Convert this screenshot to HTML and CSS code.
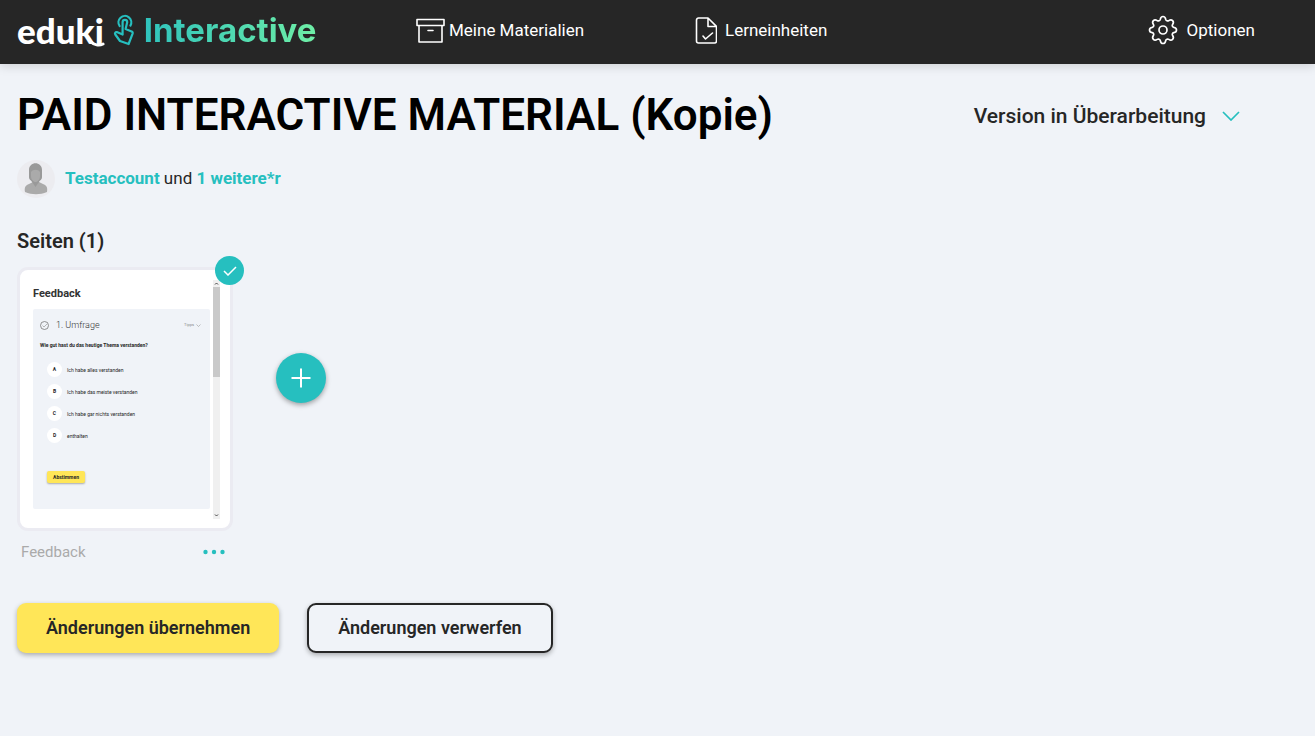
FILE: index.html
```html
<!DOCTYPE html>
<html lang="de">
<head>
    <meta charset="UTF-8">
    <meta name="viewport" content="width=device-width, initial-scale=1.0">
    <title>eduki Interactive</title>
    <link rel="stylesheet" href="styles.css">
</head>
<body>
    <header class="topbar">
        <a href="#" class="brand">
            <span class="brand-name">eduki
                <svg class="brand-swoosh" width="16" height="7" viewBox="0 0 16 7" fill="none" stroke="#fff" stroke-width="3" stroke-linecap="round"><path d="M2 2c3 3 8 4 12 2"/></svg>
            </span>
            <svg width="22" height="32" viewBox="0 0 22 32" fill="none" stroke="#26bfbf" stroke-width="2.200" stroke-linejoin="round" stroke-linecap="round">
                <path d="M6.600 12A6.400 6.400 0 1 1 17.400 11.600"/>
                <path d="M9.600 20.500V8.200a2.300 2.300 0 0 1 4.600 0L12.600 15l6 2.400a1.800 1.800 0 0 1 1 2.200L15.600 30 7 27 2.300 20.500a1.500 1.500 0 0 1 1.500-2.400l5.800 2.400z"/>
            </svg>
            <span class="brand-product">Interactive</span>
        </a>
        <a href="#" class="nav-link">
            <svg width="29" height="26" viewBox="0 0 29 26" fill="none" stroke="#fff" stroke-width="1.600" stroke-linejoin="round" stroke-linecap="round">
                <path d="M1 2.500h27v6H1zM3 8.500v16.500h23V8.500M12 13.500h5"/>
            </svg>
            Meine Materialien
        </a>
        <a href="#" class="nav-link nav-link-units">
            <svg width="22" height="28" viewBox="0 0 22 28" fill="none" stroke="#fff" stroke-width="1.600" stroke-linejoin="round" stroke-linecap="round">
                <path d="M13 2H3.500a2 2 0 0 0-2 2v21a2 2 0 0 0 2 2h16a2 2 0 0 0 2-2V10.500zM13 2v8.500h8.500M8 20l2.500 3 7-6"/>
            </svg>
            Lerneinheiten
        </a>
        <a href="#" class="nav-link nav-link-options">
            <svg width="30" height="30" viewBox="0 0 30 30" fill="none" stroke="#fff" stroke-width="1.700" stroke-linejoin="round">
                <path d="M12.300 4.400C12.600 2.400 13.400 1.500 15 1.500s2.400.9 2.700 2.900c.3 1.400 1.900 2 3.100 1.200 1.700-1.200 2.700-1.100 3.800 0s1.200 2.100 0 3.800c-.8 1.200-.2 2.600 1.200 2.900 2 .3 2.700 1.100 2.700 2.700s-.7 2.400-2.700 2.700c-1.400.3-2 1.700-1.200 2.900 1.200 1.700 1.100 2.700 0 3.800s-2.100 1.200-3.800 0c-1.200-.8-2.800-.2-3.100 1.200-.3 2-1.100 2.900-2.700 2.900s-2.400-.9-2.700-2.900c-.3-1.400-1.900-2-3.100-1.200-1.700 1.200-2.700 1.100-3.800 0s-1.200-2.100 0-3.800c.8-1.200.2-2.600-1.200-2.900-2-.3-2.700-1.100-2.700-2.700s.7-2.400 2.700-2.700c1.400-.3 2-1.700 1.200-2.900-1.200-1.700-1.100-2.700 0-3.800s2.100-1.200 3.800 0c1.200.8 2.800.2 3.100-1.200z"/>
                <circle cx="15" cy="15" r="4"/>
            </svg>
            Optionen
        </a>
    </header>

    <main class="content">
        <div class="title-row">
            <h1>PAID INTERACTIVE MATERIAL (Kopie)</h1>
            <button type="button" class="version">
                Version in Überarbeitung
                <svg width="18" height="10" viewBox="0 0 18 10" fill="none" stroke="#26bfbf" stroke-width="1.700"><path d="M1 1l8 8 8-8"/></svg>
            </button>
        </div>

        <div class="authors">
            <svg width="38" height="38" viewBox="0 0 38 38">
                <circle cx="19" cy="19" r="19" fill="#ececf0"/>
                <path d="M8 32c-1-5 1-7 4-8l4-2h6l4 2c3 1 5 3 4 8-7 3-15 3-22 0z" fill="#aaa"/>
                <path d="M12 17V10c0-9 13-9 13 0v7c0 3-2 3-3 5l-3.500 5-3.500-5c-1-2-3-2-3-5z" fill="#999"/>
                <path d="M14 12c2-3 7-3 9 0v4c0 4-3 6-4.500 6s-4.500-2-4.500-6z" fill="#aaa"/>
            </svg>
            <p><a href="#">Testaccount</a> und <a href="#">1 weitere*r</a></p>
        </div>

        <h2>Seiten (1)</h2>
        <div class="pages">
            <div class="page">
                <div class="card">
                    <div class="preview">
                        <h3>Feedback</h3>
                        <div class="survey">
                            <div class="survey-head">
                                <svg width="9" height="9" viewBox="0 0 9 9" fill="none" stroke="#777" stroke-width=".8"><circle cx="4.500" cy="4.500" r="4"/><path d="M2.500 4.500l1.500 1.500 3-3" stroke-width=".5"/></svg>
                                <span class="survey-title">1. Umfrage</span>
                                <span class="tips">Tipps</span>
                                <svg width="5" height="3" viewBox="0 0 5 3" fill="none" stroke="#999" stroke-width=".6"><path d="M.5.5l2 2 2-2"/></svg>
                            </div>
                            <p class="question">Wie gut hast du das heutige Thema verstanden?</p>
                            <ul class="answers">
                                <li><span class="letter">A</span>Ich habe alles verstanden</li>
                                <li><span class="letter">B</span>Ich habe das meiste verstanden</li>
                                <li><span class="letter">C</span>Ich habe gar nichts verstanden</li>
                                <li><span class="letter">D</span>enthalten</li>
                            </ul>
                            <button type="button" class="vote">Abstimmen</button>
                        </div>
                    </div>
                    <div class="scrollbar">
                        <svg width="7" height="7" viewBox="0 0 7 7" fill="none" stroke="#444"><path d="M2 4.500l1.500-1.500L5 4.500"/></svg>
                        <div class="scroll-thumb"></div>
                        <svg width="7" height="7" viewBox="0 0 7 7" fill="none" stroke="#444"><path d="M2 2.500l1.500 1.500L5 2.500"/></svg>
                    </div>
                    <span class="badge">
                        <svg width="14" height="10" viewBox="0 0 14 10" fill="none" stroke="#fff" stroke-width="1.500"><path d="M1 5l4 4 8-8"/></svg>
                    </span>
                </div>
                <div class="caption">
                    <span>Feedback</span>
                    <button type="button" class="more" aria-label="Mehr">
                        <svg width="22" height="6" viewBox="0 0 22 6" fill="#26bfbf"><circle cx="2.500" cy="3" r="2.200"/><circle cx="11" cy="3" r="2.200"/><circle cx="19.500" cy="3" r="2.200"/></svg>
                    </button>
                </div>
            </div>
            <button type="button" class="add" aria-label="Seite hinzufügen">
                <svg width="20" height="20" viewBox="0 0 20 20" fill="none" stroke="#fff" stroke-width="2"><path d="M10 .5v19M.5 10h19"/></svg>
            </button>
        </div>

        <div class="actions">
            <button type="button" class="btn btn-primary">Änderungen übernehmen</button>
            <button type="button" class="btn btn-outline">Änderungen verwerfen</button>
        </div>
    </main>
</body>
</html>
```
FILE: styles.css
```css
* {
    box-sizing: border-box;
}
body {
    margin: 0;
    font-family: Roboto, Arial, sans-serif;
    font-size: 16px;
    color: #262626;
    background-color: #f0f3f8;
}
h1, h2, h3, p, ul {
    margin: 0;
    padding: 0;
}
a {
    text-decoration: none;
}
button {
    font-family: inherit;
    color: inherit;
    padding: 0;
    border: none;
    background: none;
    cursor: pointer;
}
svg {
    display: block;
    flex-shrink: 0;
}
.topbar {
    display: grid;
    grid-template-columns: 399fr 279fr 280fr 280fr;
    align-items: center;
    height: 64px;
    padding: 0 60px 4px 17px;
    background-color: #262626;
    box-shadow: 0 2px 10px rgba(0, 0, 0, 0.15);
}
.brand {
    display: flex;
    align-items: center;
    gap: 9px;
}
.brand-name {
    position: relative;
    font-family: Lato, sans-serif;
    font-size: 35px;
    font-weight: 900;
    line-height: 40px;
    color: white;
}
.brand-swoosh {
    position: absolute;
    right: -1px;
    bottom: 3px;
}
.brand-product {
    font-family: Inter, sans-serif;
    font-size: 33px;
    font-weight: 700;
    line-height: 40px;
    color: transparent;
    background: linear-gradient(90deg, #2fc3bd, #6eeea6);
    -webkit-background-clip: text;
    background-clip: text;
}
.nav-link {
    display: flex;
    align-items: center;
    gap: 4px;
    font-size: 17px;
    color: white;
}
.nav-link-units {
    gap: 8px;
}
.nav-link-options {
    justify-content: flex-end;
    gap: 9px;
}
.content {
    padding: 25px 75px 40px 17px;
}
.title-row {
    display: flex;
    align-items: center;
    justify-content: space-between;
}
h1 {
    font-size: 44px;
    font-weight: 600;
    line-height: 52px;
    color: black;
}
.version {
    display: flex;
    align-items: center;
    gap: 16px;
    padding-top: 2px;
    font-size: 21px;
    font-weight: 500;
}
.authors {
    display: flex;
    align-items: center;
    gap: 10px;
    margin-top: 19px;
    font-size: 17px;
}
.authors p {
    padding-bottom: 2px;
}
.authors a {
    font-weight: 700;
    color: #26bfbf;
}
h2 {
    margin-top: 31px;
    font-size: 20px;
    font-weight: 600;
    line-height: 24px;
}
.pages {
    display: flex;
    align-items: flex-start;
    gap: 43px;
    margin-top: 14px;
}
.page {
    width: 216px;
}
.card {
    position: relative;
    display: flex;
    gap: 3px;
    height: 264px;
    padding: 10px 10px 9px 13px;
    border: 3px solid #ebebf2;
    border-radius: 11px;
    background-color: white;
}
.preview {
    flex-grow: 1;
    padding-top: 7px;
}
h3 {
    font-size: 11px;
    line-height: 14px;
    color: #333;
}
.survey {
    height: 200px;
    margin-top: 8px;
    padding: 10px 9px 0 7px;
    border-radius: 2px;
    background-color: #f0f3f8;
}
.survey-head {
    display: flex;
    align-items: center;
    gap: 2px;
    line-height: 12px;
}
.survey-title {
    flex-grow: 1;
    margin-left: 5px;
    font-size: 9px;
    font-weight: 300;
    color: #333;
}
.tips {
    font-size: 4px;
    color: #888;
}
.question {
    margin-top: 9px;
    font-size: 5px;
    font-weight: 700;
    line-height: 10px;
    white-space: nowrap;
}
.answers {
    display: grid;
    gap: 7px;
    margin: 12px 0 0 7px;
    list-style: none;
}
.answers li {
    display: flex;
    align-items: center;
    gap: 5px;
    font-size: 5px;
}
.letter {
    width: 15px;
    border-radius: 50%;
    font-weight: 700;
    line-height: 15px;
    text-align: center;
    background-color: white;
}
.vote {
    display: block;
    width: 38px;
    height: 12px;
    margin: 28px 0 0 7px;
    border-radius: 2px;
    font-size: 5px;
    font-weight: 700;
    background-color: #ffe658;
    box-shadow: 0 1px 2px rgba(0, 0, 0, 0.3);
}
.scrollbar {
    display: flex;
    flex-direction: column;
    width: 7px;
    background-color: #f0f0f0;
}
.scroll-thumb {
    height: 90px;
    margin-bottom: auto;
    background-color: #c9c9c9;
}
.badge {
    position: absolute;
    top: -14px;
    right: -14px;
    display: flex;
    align-items: center;
    justify-content: center;
    width: 29px;
    height: 29px;
    border-radius: 50%;
    background-color: #26bfbf;
}
.caption {
    display: flex;
    align-items: center;
    justify-content: space-between;
    margin-top: 11px;
    padding: 0 8px 0 4px;
    font-size: 15px;
    line-height: 20px;
    color: #aaa;
}
.add {
    display: flex;
    align-items: center;
    justify-content: center;
    width: 50px;
    height: 50px;
    margin-top: 86px;
    border-radius: 50%;
    background-color: #26bfbf;
    box-shadow: 0 2px 5px rgba(0, 0, 0, 0.35);
}
.actions {
    display: flex;
    gap: 28px;
    margin-top: 41px;
}
.btn {
    height: 50px;
    padding: 0 29px 2px;
    border-radius: 9px;
    font-size: 18px;
    font-weight: 600;
    box-shadow: 0 2px 5px rgba(0, 0, 0, 0.3);
}
.btn-primary {
    background-color: #ffe658;
}
.btn-outline {
    border: 2px solid #262626;
    background-color: #f0f3f8;
}
```
